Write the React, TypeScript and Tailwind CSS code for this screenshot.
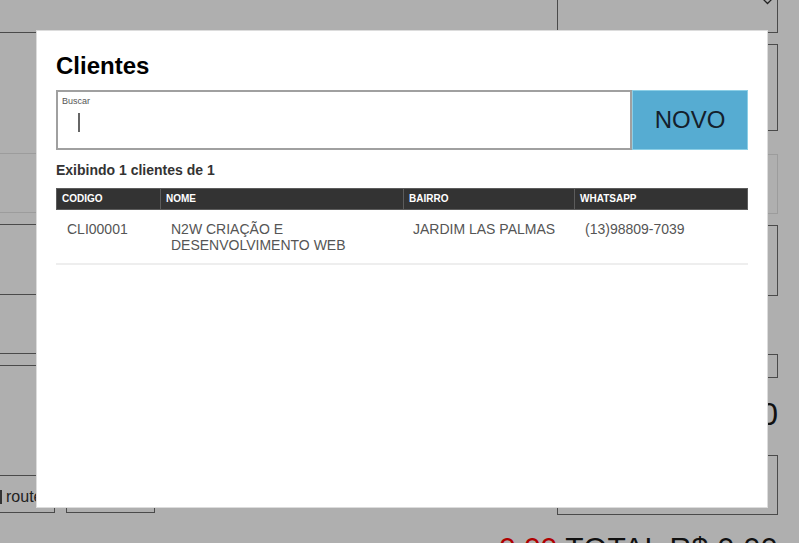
import React from "react";

const font = { fontFamily: '"Liberation Sans", Arial, sans-serif' };

function Background() {
  return (
    <div className="flex w-full h-full">
      {/* left column */}
      <div className="flex flex-col w-[410px] ml-[-10px] shrink-0">
        <div className="h-[34px] -mt-px border-b border-[#4a4a4a] shrink-0" />
        <div className="h-[60px] mt-[120px] border border-[#9c9c9c] shrink-0" />
        <div className="h-[71px] mt-[11px] border border-[#4a4a4a] shrink-0" />
        <div className="h-[13px] mt-[58px] border border-[#4a4a4a] shrink-0" />
        <div className="flex gap-[11px] mt-[109px] shrink-0">
          <div className="h-[38px] w-[65px] border border-[#4a4a4a] flex items-center pt-[5px]">
            <span className="w-[14px] h-[14px] border-2 border-[#333] ml-[-3px] shrink-0" />
            <span className="ml-[4px] text-[16px] text-[#222] leading-none" style={font}>
              router
            </span>
          </div>
          <div className="h-[38px] w-[89px] border border-[#4a4a4a]" />
        </div>
      </div>
      {/* right column */}
      <div className="flex flex-col w-[221px] ml-auto mr-[21px] shrink-0">
        <div className="h-[63px] mt-[-30px] border border-[#4a4a4a] flex items-center justify-end pr-[4px] shrink-0">
          <svg width="11" height="7" viewBox="0 0 11 7" fill="none">
            <path d="M0.5 0.5 L5.5 5.5 L10.5 0.5" stroke="#222" strokeWidth="1.3" />
          </svg>
        </div>
        <div className="h-[87px] mt-[11px] border border-[#4a4a4a] shrink-0" />
        <div className="h-[60px] mt-[23px] border border-[#9c9c9c] shrink-0" />
        <div className="h-[71px] mt-[11px] border border-[#4a4a4a] shrink-0" />
        <div className="h-[24px] mt-[58px] border border-[#4a4a4a] shrink-0" />
        <div className="mt-[20px] flex justify-end text-[32px] leading-[32px] text-[#111] whitespace-nowrap shrink-0" style={font}>
          R$ 0,00
        </div>
        <div className="h-[60px] mt-[25px] border border-[#4a4a4a] shrink-0" />
        <div className="mt-[18px] flex justify-end whitespace-nowrap text-[30px] leading-[30px] shrink-0" style={font}>
          <span className="text-[#b00000]">0,00</span>
          <span className="text-[#111] ml-[8px] tracking-[0.5px]">TOTAL R$ 0,00</span>
        </div>
      </div>
    </div>
  );
}

function Modal() {
  const cols = "grid grid-cols-[104px_243px_171px_1fr]";
  return (
    <div
      className="absolute left-[36px] top-[30px] w-[732px] h-[478px] bg-white border border-[#dcdcdc] pt-[21px] px-[19px]"
      style={font}
    >
      <h1 className="text-[24px] leading-[28px] font-bold text-black">Clientes</h1>
      <div className="flex mt-[10px] h-[60px]">
        <div className="w-[576px] h-[60px] border-2 border-[#a0a0a0] flex flex-col px-[4px] pt-[4px]">
          <span className="text-[9px] leading-[10px] text-[#555]">Buscar</span>
          <span className="mt-[7px] ml-[16px] w-[2px] h-[19px] bg-[#666]" />
        </div>
        <button className="w-[116px] h-[60px] bg-[#56acd2] border border-[#8ccfe6] text-[24px] text-[#14202c] flex items-center justify-center">
          NOVO
        </button>
      </div>
      <div className="mt-[12px] text-[14px] leading-[16px] font-bold text-[#333]">
        Exibindo 1 clientes de 1
      </div>
      <div className="mt-[10px] grid grid-cols-[103px_242px_170px_1fr] gap-px p-px bg-[#5c5c5c] h-[22px]">
        {["CODIGO", "NOME", "BAIRRO", "WHATSAPP"].map((h) => (
          <div
            key={h}
            className="bg-[#333] text-white text-[10px] font-bold flex items-center pl-[5px] leading-none"
          >
            {h}
          </div>
        ))}
      </div>
      <div className={`${cols} border-b-2 border-[#eeeeee] pt-[11px] pb-[10px] text-[14px] leading-[16px] text-[#555]`}>
        <div className="pl-[11px]">CLI00001</div>
        <div className="pl-[11px]">N2W CRIAÇÃO E DESENVOLVIMENTO WEB</div>
        <div className="pl-[10px]">JARDIM LAS PALMAS</div>
        <div className="pl-[11px]">(13)98809-7039</div>
      </div>
    </div>
  );
}

export default function App() {
  return (
    <div className="relative w-[799px] h-[543px] overflow-hidden bg-[#afafaf]">
      <Background />
      <Modal />
    </div>
  );
}
